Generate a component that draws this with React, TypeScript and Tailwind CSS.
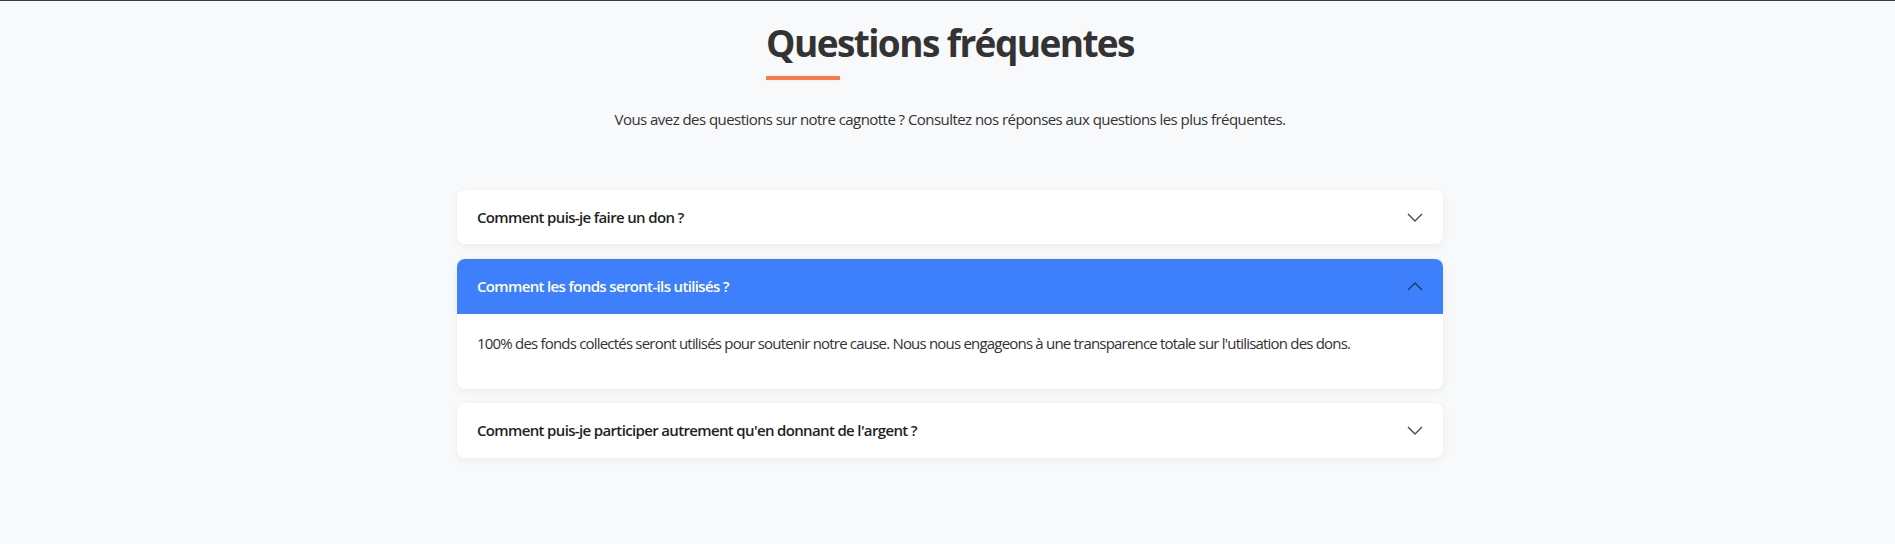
import React from "react";

const Chevron = ({ up, className }: { up?: boolean; className?: string }) => (
  <svg width="16" height="9" viewBox="0 0 16 9" className={className} fill="none">
    {up ? (
      <polyline points="1,8 8,1 15,8" stroke="currentColor" strokeWidth="1.4" />
    ) : (
      <polyline points="1,1 8,8 15,1" stroke="currentColor" strokeWidth="1.4" />
    )}
  </svg>
);

export default function App() {
  const font = { fontFamily: '"Segoe UI", "Open Sans", sans-serif' };
  return (
    <div className="min-h-[544px] bg-[#f8f9fa] border-t border-[#333b3f]" style={font}>
      <div className="pl-[5px] pt-[18px] flex flex-col items-center">
        <div className="relative">
          <h2 className="text-[37px] leading-[48px] font-bold tracking-[-1.6px] text-[#333333]">Questions fréquentes</h2>
          <div className="w-1/5 h-[4px] bg-[#ff7a45] mt-[9px]"></div>
        </div>
        <p className="mt-[27px] text-[15px] leading-6 tracking-[-0.55px] text-[#333333]">
          Vous avez des questions sur notre cagnotte ? Consultez nos réponses aux questions les plus fréquentes.
        </p>
        <div className="w-[986px] mt-[59px] flex flex-col">
          <div className="bg-white rounded-lg shadow-[0_2px_8px_rgba(0,0,0,0.06)] mb-[15px]">
            <div className="h-[54px] px-5 flex items-center justify-between">
              <span className="text-[15px] font-semibold tracking-[-0.65px] text-[#1f1f1f]">Comment puis-je faire un don ?</span>
              <Chevron className="text-[#444b55]" />
            </div>
          </div>
          <div className="bg-white rounded-lg shadow-[0_2px_8px_rgba(0,0,0,0.06)] mb-[14px] overflow-hidden">
            <div className="h-[55px] px-5 flex items-center justify-between bg-[#3e7ffb]">
              <span className="text-[15px] font-semibold tracking-[-0.65px] text-white">Comment les fonds seront-ils utilisés ?</span>
              <Chevron up className="text-[#1e3a6e]" />
            </div>
            <div className="h-[75px] px-5 pt-[17px]">
              <p className="text-[15px] leading-6 tracking-[-0.8px] text-[#333333]">
                100% des fonds collectés seront utilisés pour soutenir notre cause. Nous nous engageons à une transparence totale sur l'utilisation des dons.
              </p>
            </div>
          </div>
          <div className="bg-white rounded-lg shadow-[0_2px_8px_rgba(0,0,0,0.06)]">
            <div className="h-[55px] px-5 flex items-center justify-between">
              <span className="text-[15px] font-semibold tracking-[-0.65px] text-[#1f1f1f]">Comment puis-je participer autrement qu'en donnant de l'argent ?</span>
              <Chevron className="text-[#444b55]" />
            </div>
          </div>
        </div>
      </div>
    </div>
  );
}
